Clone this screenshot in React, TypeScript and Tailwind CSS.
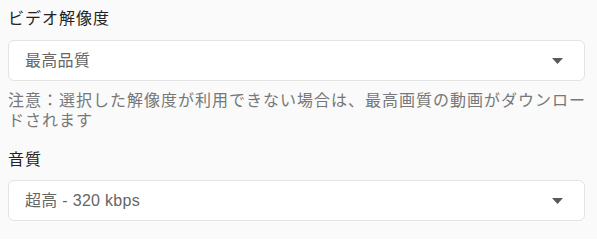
import { useState } from "react";

type Option = { value: string; label: string };

const videoOptions: Option[] = [
  { value: "best", label: "最高品質" },
  { value: "1080", label: "1080p" },
  { value: "720", label: "720p" },
  { value: "480", label: "480p" },
];

const audioOptions: Option[] = [
  { value: "320", label: "超高 - 320 kbps" },
  { value: "256", label: "高 - 256 kbps" },
  { value: "128", label: "標準 - 128 kbps" },
];

function SelectBox({ options, value, onChange }: { options: Option[]; value: string; onChange: (v: string) => void }) {
  return (
    <div className="relative">
      <select
        value={value}
        onChange={(e) => onChange(e.target.value)}
        className="w-full h-[41px] appearance-none bg-white border border-[#e3e3e3] rounded-md pl-4 pr-10 text-[16px] text-[#666] tracking-[0.3px] outline-none"
      >
        {options.map((o) => (
          <option key={o.value} value={o.value}>
            {o.label}
          </option>
        ))}
      </select>
      {/* caret */}
      <svg className="pointer-events-none absolute right-[22px] top-[18px]" width="11" height="6" viewBox="0 0 11 6">
        <path d="M0 0h11L5.5 6z" fill="#5a5a5a" />
      </svg>
    </div>
  );
}

export default function App() {
  const [video, setVideo] = useState("best");
  const [audio, setAudio] = useState("320");

  return (
    <div
      className="min-h-[239px] bg-[#fafafa] pl-2 pr-3 pt-[7px]"
      style={{ fontFamily: '"Liberation Sans", "Noto Sans CJK JP", sans-serif' }}
    >
      <div className="text-[16px] leading-6 text-[#222] tracking-[1px] mb-[9px]">ビデオ解像度</div>
      <SelectBox options={videoOptions} value={video} onChange={setVideo} />
      <p className="mt-[10px] text-[16px] leading-5 text-[#777] tracking-[1px]">
        <span className="whitespace-nowrap">注意：選択した解像度が利用できない場合は、最高画質の動画がダウンロー</span>
        <br />
        ドされます
      </p>

      <div className="mt-[17px] text-[16px] leading-6 text-[#222] tracking-[1px] mb-2">音質</div>
      <SelectBox options={audioOptions} value={audio} onChange={setAudio} />
    </div>
  );
}
